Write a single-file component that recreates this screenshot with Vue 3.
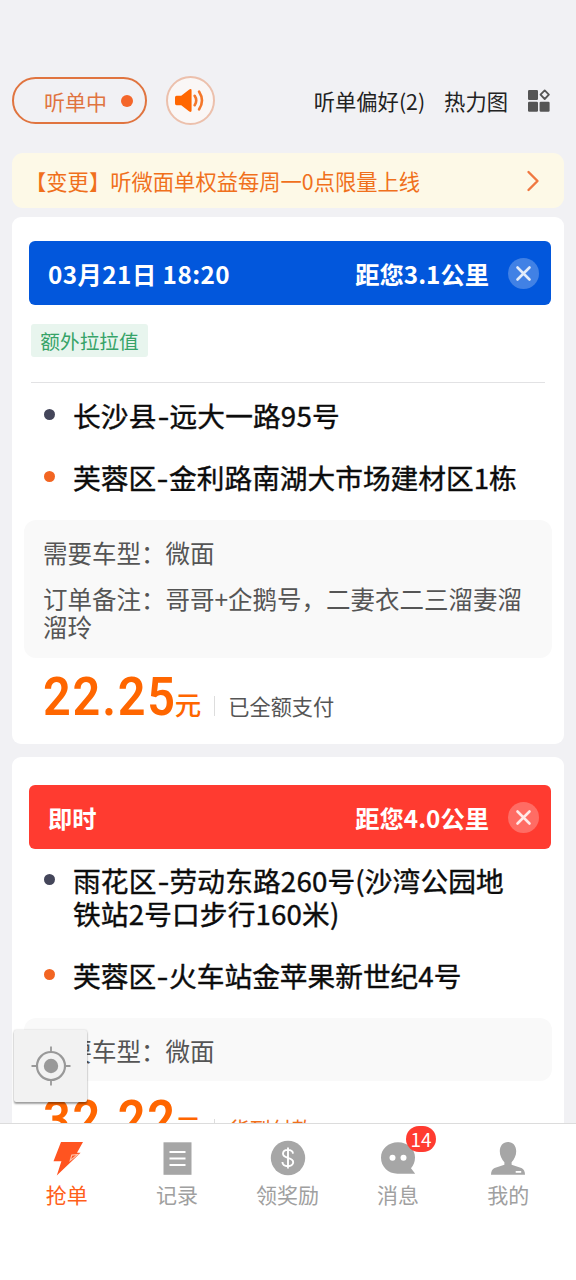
<script setup>
const orders = [
  {
    kind: 'booked',
    time: '03月21日 18:20',
    distance: '距您3.1公里',
    tag: '额外拉拉值',
    from: ['长沙县', '远大一路95号'],
    to: ['芙蓉区', '金利路南湖大市场建材区1栋'],
    notes: ['需要车型：微面', '订单备注：哥哥+企鹅号，二妻衣二三溜妻溜溜玲'],
    price: '22.25',
    payment: '已全额支付',
  },
  {
    kind: 'instant',
    time: '即时',
    distance: '距您4.0公里',
    tag: '',
    from: ['雨花区', '劳动东路260号(沙湾公园地铁站2号口步行160米)'],
    to: ['芙蓉区', '火车站金苹果新世纪4号'],
    notes: ['需要车型：微面'],
    price: '32.22',
    payment: '货到付款',
  },
]

const tabs = [
  { id: 'grab', label: '抢单' },
  { id: 'records', label: '记录' },
  { id: 'rewards', label: '领奖励' },
  { id: 'messages', label: '消息', badge: 14 },
  { id: 'mine', label: '我的' },
]
</script>

<template>
  <div class="app">
    <header class="topbar">
      <div class="status"><span>听单中</span><i class="status-dot"></i></div>
      <div class="sound">
        <svg width="29" height="25" viewBox="0 0 28 24">
          <path d="M1.500 7.500h4.500L13.800 1.400q2.200-1.200 2.200 1v19.200q0 2.200-2.200 1L6 16.500H1.500Q0 16.500 0 15v-6Q0 7.500 1.500 7.500z" fill="#f60" />
          <path d="M19 7.500q3 4.500 0 9M23.300 3.500q5.500 8.500 0 17" fill="none" stroke="#f4772a" stroke-width="2.500" stroke-linecap="round" />
        </svg>
      </div>
      <span class="link pref">听单偏好(2)</span>
      <span class="link">热力图</span>
      <svg class="grid-icon" width="24" height="24" viewBox="0 0 24 24">
        <g fill="#555">
          <rect x="1" y="1" width="10" height="10" rx="1.200" />
          <rect x="1" y="12.700" width="10" height="10" rx="1.200" />
          <rect x="12.600" y="12.700" width="10" height="10" rx="1.200" />
        </g>
        <path d="M17.700 1.400l4.200 4.300-4.200 4.300-4.200-4.300z" fill="none" stroke="#555" stroke-width="1.800" stroke-linejoin="round" />
      </svg>
    </header>

    <div class="notice">
      <span>【变更】听微面单权益每周一0点限量上线</span>
      <svg width="14" height="22" viewBox="0 0 14 22">
        <path d="M2.500 2l9 9-9 9" fill="none" stroke="#f07840" stroke-width="2.400" stroke-linecap="round" stroke-linejoin="round" />
      </svg>
    </div>

    <main class="orders">
      <article v-for="order in orders" :key="order.kind" class="card" :class="order.kind">
        <div class="banner">
          <span class="time">{{ order.time }}</span>
          <span class="distance">{{ order.distance }}</span>
          <span class="close">
            <svg width="31" height="31" viewBox="0 0 31 31">
              <path d="M9.500 9.500l12 12M21.500 9.500l-12 12" stroke="#fff" stroke-opacity=".85" stroke-width="2.600" stroke-linecap="round" />
            </svg>
          </span>
        </div>
        <div v-if="order.tag" class="tag-row"><span class="tag">{{ order.tag }}</span></div>
        <div class="route">
          <div class="stop from"><i></i><p>{{ order.from[0] }}<span class="dash">-</span>{{ order.from[1] }}</p></div>
          <div class="stop to"><i></i><p>{{ order.to[0] }}<span class="dash">-</span>{{ order.to[1] }}</p></div>
        </div>
        <div class="notes"><p v-for="note in order.notes" :key="note">{{ note }}</p></div>
        <div class="fee">
          <span class="price">{{ order.price }}</span>
          <span class="yuan">元</span>
          <i class="bar"></i>
          <span class="payment">{{ order.payment }}</span>
        </div>
      </article>
    </main>

    <button class="locate">
      <svg width="40" height="40" viewBox="0 0 40 40">
        <circle cx="20" cy="20" r="14" fill="none" stroke="#999" stroke-width="2.200" />
        <circle cx="20" cy="20" r="7.200" fill="#999" />
        <path d="M20 .5v6M20 33.500v6M.5 20h6M33.500 20h6" stroke="#999" stroke-width="1.800" />
      </svg>
    </button>

    <nav class="tabs">
      <div v-for="tab in tabs" :key="tab.id" class="tab" :class="tab.id">
        <div class="tab-icon">
          <svg v-if="tab.id === 'grab'" width="36" height="36" viewBox="0 0 36 36">
            <path d="M12 2h22l-6 10.700h3.600L7.800 35.500l4.600-14.300H4.500z" fill="#ff5420" />
            <path d="M21.200 20.500l1.600-5.400 6-.6z" fill="none" stroke="#ffc0a8" stroke-width="1.100" />
          </svg>
          <svg v-else-if="tab.id === 'records'" width="36" height="36" viewBox="0 0 36 36">
            <rect x="4.500" y="2.300" width="28" height="32.500" fill="#a6a6a6" />
            <path d="M10.500 12h16M10.500 18.500h16M10.500 25h16" stroke="#fff" stroke-width="1.800" />
          </svg>
          <svg v-else-if="tab.id === 'rewards'" width="36" height="36" viewBox="0 0 36 36">
            <circle cx="18" cy="18" r="17.200" fill="#a6a6a6" />
            <path d="M23 13.600c-.4-5-10-5-10 .2 0 5.200 10.200 3 10.200 8.400 0 5.400-10.500 5.400-10.800-.2M18 7.500v21" fill="none" stroke="#fff" stroke-width="1.900" />
          </svg>
          <svg v-else-if="tab.id === 'messages'" width="36" height="36" viewBox="0 0 36 36">
            <path d="M18 2.300c9.600 0 17 6.600 17 15.200 0 4.600-1.600 8-4 10.800l4.200 5.400H17.500C8 33.700 1 26.500 1 17.800 1 9 8.400 2.300 18 2.300z" fill="#a6a6a6" />
            <circle cx="12.500" cy="17.800" r="3" fill="#fff" /><circle cx="23.500" cy="17.800" r="3" fill="#fff" />
          </svg>
          <svg v-else width="36" height="36" viewBox="0 0 36 36">
            <path d="M18 2c5 0 8.200 3.800 8.200 9.200 0 4.600-2 8-4.600 11v2.500l9.800 3.200q3.600 1.400 3.600 6.900H1q0-5.500 3.600-6.900l9.800-3.200v-2.500c-2.600-3-4.600-6.400-4.600-11C9.800 5.800 13 2 18 2z" fill="#a6a6a6" />
            <rect x="25.700" y="31" width="5.500" height="1.800" fill="#fff" />
          </svg>
          <span v-if="tab.badge" class="badge">{{ tab.badge }}</span>
        </div>
        <span class="label">{{ tab.label }}</span>
      </div>
    </nav>
  </div>
</template>

<style>
body {
  background: #f1f1f4;
}
</style>

<style scoped>
.app {
  position: relative;
  display: flex;
  flex-direction: column;
  width: 576px;
  height: 1280px;
  overflow: hidden;
  background: #f1f1f4;
  font-family: "Noto Sans CJK SC", sans-serif;
}
p { margin: 0; }
svg { display: block; flex: none; }

.topbar {
  display: flex;
  align-items: center;
  flex: none;
  height: 50px;
  margin-top: 76px;
  padding: 0 25px 0 12px;
}
.status {
  box-sizing: border-box;
  display: flex;
  align-items: center;
  justify-content: space-between;
  width: 135px;
  height: 47px;
  margin-bottom: 1px;
  padding: 0 12px 0 30px;
  border: 2px solid #e0743f;
  border-radius: 24px;
  color: #e0743f;
  font-size: 21px;
  line-height: 42px;
}
.status-dot {
  width: 12px;
  height: 12px;
  border-radius: 50%;
  background: #f4662a;
}
.sound {
  box-sizing: border-box;
  display: flex;
  align-items: center;
  width: 49px;
  height: 49px;
  margin: 0 0 1px 19px;
  padding-left: 7px;
  border: 2px solid #ecc0ac;
  border-radius: 50%;
  background: #faf7f6;
}
.link {
  color: #222;
  font-size: 21.300px;
  line-height: 48px;
}
.pref { margin: 0 19px 0 auto; }
.grid-icon { margin-left: 19px; }

.notice {
  display: flex;
  align-items: center;
  justify-content: space-between;
  flex: none;
  height: 55px;
  margin: 27px 12px 9px;
  padding: 0 24px 0 13px;
  border-radius: 11px;
  background: #fdf9e7;
  color: #f0701c;
  font-size: 21.300px;
}

.orders {
  flex: 1;
  min-height: 0;
  overflow: hidden;
}
.card {
  box-sizing: border-box;
  height: 527px;
  margin: 0 12px 13px;
  padding: 24px 12px 0;
  border-radius: 9px;
  background: #fff;
}
.instant {
  height: 480px;
  padding-top: 28px;
}
.banner {
  display: flex;
  align-items: center;
  box-sizing: border-box;
  height: 64px;
  margin: 0 1px 0 5px;
  padding: 0 12px 0 19px;
  border-radius: 6px;
  color: #fff;
  font-size: 24.300px;
  font-weight: 700;
}
.booked .banner { background: #0257dc; }
.booked .time { letter-spacing: .450px; }
.instant .banner { background: #ff3b30; }
.distance { margin: 0 19px 0 auto; }
.close {
  border-radius: 50%;
  background: rgba(255, 255, 255, .25);
}
.tag-row {
  display: flex;
  height: 58px;
  margin: 19px 7px 0;
  border-bottom: 1px solid #e2e2e4;
}
.tag {
  width: 117px;
  height: 33px;
  border-radius: 3px;
  background: #e8f5ee;
  color: #36a368;
  font-size: 19.700px;
  line-height: 34px;
  text-align: center;
}
.route {
  display: flex;
  flex-direction: column;
  gap: 29px;
  padding: 16px 28px 0 19px;
}
.instant .route { padding-top: 15px; }
.stop {
  display: flex;
  color: #0c0c0c;
  font-size: 27.700px;
  font-weight: 400;
  line-height: 33px;
  -webkit-text-stroke: .400px #0c0c0c;
}
.stop.from { letter-spacing: .150px; }
.stop i {
  flex: none;
  width: 11px;
  height: 11px;
  margin: 10px 18px 0 1px;
  border-radius: 50%;
  background: #44465a;
}
.stop.to i { background: #f26522; }
.dash {
  display: inline-block;
  width: 13px;
  text-align: center;
  transform: scaleX(1.200);
}
.notes {
  box-sizing: border-box;
  margin-top: 26px;
  padding: 19px 10px 16px 19px;
  border-radius: 12px;
  background: #f9f9f9;
  color: #555;
  font-size: 24.500px;
  line-height: 28.700px;
}
.notes p + p { margin-top: 17px; }
.instant .notes { padding-bottom: 15px; }
.fee {
  display: flex;
  align-items: baseline;
  height: 58px;
  margin-top: 9px;
  padding-left: 19px;
  line-height: 60px;
}
.price {
  display: inline-block;
  margin-right: -15px;
  color: #f60;
  font-family: Roboto, "Noto Sans CJK SC", sans-serif;
  font-size: 54px;
  font-weight: 600;
  letter-spacing: 2px;
  transform: scaleX(.9);
  transform-origin: 0 50%;
}
.yuan {
  margin-left: -2px;
  color: #f60;
  font-size: 26.500px;
  font-weight: 500;
}
.bar {
  align-self: flex-start;
  width: 1px;
  height: 20px;
  margin: 29px 13px 0;
  background: #ddd;
}
.payment {
  color: #555;
  font-size: 21.200px;
}
.instant .payment { color: #f0701c; }

.locate {
  position: absolute;
  left: 14px;
  top: 1030px;
  display: flex;
  align-items: center;
  justify-content: center;
  width: 73px;
  height: 72px;
  padding: 0;
  border: 0;
  border-radius: 2px;
  background: #f2f2f2;
  box-shadow: 0 2px 2px rgba(0, 0, 0, .35), 0 0 2px rgba(0, 0, 0, .2);
}

.tabs {
  position: relative;
  display: flex;
  box-sizing: border-box;
  flex: none;
  height: 157px;
  padding: 16px 12px 0;
  border-top: 1px solid #dcdcdc;
  background: #fff;
}
.tab {
  display: flex;
  flex: 1;
  flex-direction: column;
  align-items: center;
  color: #a0a0a0;
  font-size: 21px;
  line-height: 30px;
}
.tab-icon {
  position: relative;
  margin-right: 1px;
}
.label { margin: 3px 1px 0 0; }
.grab .label { color: #ff5f1a; }
.badge {
  position: absolute;
  left: 26px;
  top: -14px;
  width: 30px;
  height: 26px;
  border-radius: 13px;
  background: #ff3b30;
  color: #fff;
  font-size: 19px;
  line-height: 26px;
  text-align: center;
}
</style>
